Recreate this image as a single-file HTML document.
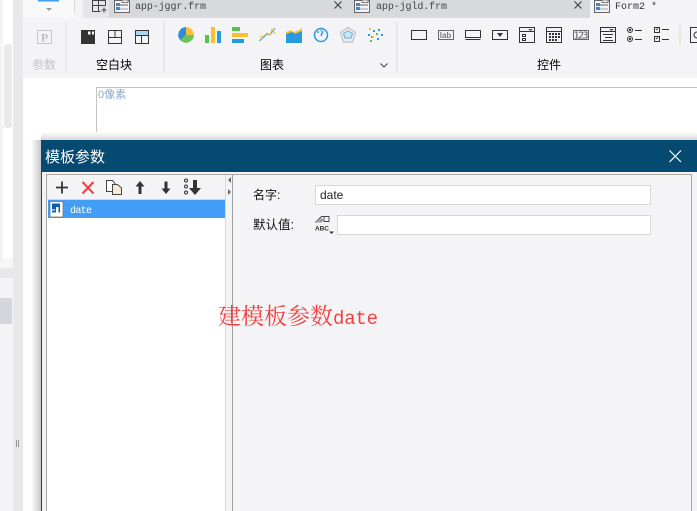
<!DOCTYPE html>
<html><head><meta charset="utf-8"><style>
html,body{margin:0;padding:0;background:#fff}
body{width:697px;height:511px;overflow:hidden;position:relative}
svg{position:absolute;left:0;top:0;display:block}
text{font-family:"Liberation Sans","Noto Sans CJK SC",sans-serif}
</style></head><body>
<svg width="697" height="511" viewBox="0 0 697 511" xmlns="http://www.w3.org/2000/svg">
<defs>
<linearGradient id="ls" x1="0" x2="1" y1="0" y2="0"><stop offset="0" stop-color="#fff"/><stop offset="1" stop-color="#c8c8c8"/></linearGradient>
<linearGradient id="ts" x1="0" x2="0" y1="0" y2="1"><stop offset="0" stop-color="#fff"/><stop offset="1" stop-color="#d8d8d8"/></linearGradient>
<g id="doc"><rect x="0.5" y="0.5" width="15" height="12" fill="#f4f4f6" stroke="#666"/><rect x="2" y="3" width="4" height="3" fill="#3b86cf"/><rect x="2" y="7" width="4" height="3" fill="#3b86cf"/><rect x="6" y="4" width="8" height="2" fill="#aaa"/><rect x="6" y="8" width="8" height="2" fill="#ccc"/><rect x="8" y="0" width="6" height="2.500" fill="#f4f4f6" stroke="#666" stroke-width=".8"/></g>
</defs>
<!-- left side -->
<rect x="0" y="0" width="3" height="511" fill="#f4f4f6"/>
<rect x="3" y="0" width="10" height="268" fill="#fff"/>
<rect x="4" y="44" width="8" height="84" rx="3" fill="#e9e9e9"/>
<rect x="3" y="258" width="10" height="10" fill="#f6f6f6"/>
<rect x="0" y="268" width="13" height="10" fill="#e8e8e8"/>
<rect x="0" y="278" width="13" height="233" fill="#f4f4f6"/>
<rect x="0" y="298" width="12" height="26" fill="#d5d6db"/>
<rect x="13" y="0" width="10" height="511" fill="#e8e8e8"/>
<rect x="16" y="440" width="1" height="7" fill="#999"/><rect x="18" y="440" width="1" height="7" fill="#999"/>
<!-- top tabs -->
<rect x="23" y="0" width="674" height="78" fill="#f4f4f6"/>
<rect x="23" y="0" width="52" height="18" fill="#f8f8f9"/>
<rect x="38" y="0" width="21" height="1.500" fill="#3f9cf0"/>
<path d="M46 8h6l-3 3z" fill="#999"/>
<rect x="74" y="0" width="1" height="14" fill="#d8d8d8"/>
<rect x="83" y="0" width="507" height="18" fill="#d8d9dc"/>
<rect x="83" y="0" width="26" height="18" fill="#e6e6e9"/>
<path d="M92.500 0v11.500h8M92.500 0.500h13v5M92.500 5.500h13M98.500 0v11.500M104 7.500v5M101.500 10h5" fill="none" stroke="#444" stroke-width="1"/>
<use href="#doc" x="114" y="0"/>
<text x="135" y="9" font-size="10" style="font-family:'Liberation Mono','Liberation Serif',monospace" fill="#444" textLength="71">app-jggr.frm</text>
<path d="M334.500 1.500l7 7m0-7l-7 7" stroke="#444" stroke-width="1.200" fill="none"/>
<use href="#doc" x="354" y="0"/>
<text x="376" y="9" font-size="10" style="font-family:'Liberation Mono','Liberation Serif',monospace" fill="#444" textLength="71">app-jgld.frm</text>
<path d="M574.500 1.500l7 7m0-7l-7 7" stroke="#444" stroke-width="1.200" fill="none"/>
<rect x="590" y="0" width="107" height="18" fill="#f4f4f6"/>
<use href="#doc" x="594" y="0"/>
<text x="615" y="9" font-size="10" style="font-family:'Liberation Mono','Liberation Serif',monospace" fill="#333" textLength="42">Form2 *</text>
<!-- ribbon separators -->
<rect x="65" y="22" width="2" height="50" fill="#e9e9e3"/>
<rect x="163" y="22" width="2" height="50" fill="#e9e9e3"/>
<rect x="396" y="22" width="2" height="50" fill="#e9e9e3"/>
<rect x="679" y="25" width="2" height="20" fill="#e9e6da"/>
<!-- P -->
<rect x="37.500" y="30.500" width="14" height="13" fill="none" stroke="#c8c8c8"/>
<text x="44.500" y="41.500" font-size="12" font-weight="bold" text-anchor="middle" style="font-family:'Liberation Serif',serif" fill="#c0c0c0">P</text>
<text x="32" y="69" font-size="12" fill="#c4c4c4">参数</text>
<!-- blank block icons -->
<rect x="81" y="30" width="14" height="14" fill="#333"/><rect x="88" y="31.500" width="2.500" height="3" fill="#fff"/><rect x="92" y="31.500" width="2" height="3" fill="#fff"/>
<path d="M108.500 30.500h13v13h-13zM108.500 37.500h13M115 30.500v7" fill="none" stroke="#333"/>
<rect x="135" y="30" width="14" height="5" fill="#a9d8f0"/>
<path d="M135.500 30.500h13v13h-13zM135.500 35.500h13M141.500 35.500v8" fill="none" stroke="#333"/>
<text x="96" y="69" font-size="12" fill="#000">空白块</text>
<!-- charts -->
<path d="M186 27a8 8 0 0 1 8 8h-8z" fill="#f9bf3b"/>
<path d="M194 35a8 8 0 0 1-14 5l6-5z" fill="#6ac259"/>
<path d="M186 27v8l-6 5a8 8 0 0 1 6-13z" fill="#2a8fd8"/>
<rect x="205" y="35" width="4" height="8" fill="#5ac24f"/><rect x="211" y="27" width="4" height="16" fill="#fbc02d"/><rect x="217" y="31" width="4" height="12" fill="#2a9ae0"/>
<rect x="232" y="27" width="8" height="4" fill="#5ac24f"/><rect x="232" y="33" width="16" height="4" fill="#fbc02d"/><rect x="232" y="39" width="12" height="4" fill="#2a9ae0"/>
<path d="M259 41l5-4 3-3 3 1 5-7" fill="none" stroke="#3a9be0" stroke-width="1"/>
<path d="M260 37l4-1 3-3 3 2 2-6 3 5" fill="none" stroke="#f0bb3a" stroke-width="1"/>
<path d="M286 32l5-2 3 2 5-2 3-2v6l-5 1-4 2-7-1z" fill="#f9bf3b"/>
<path d="M286 34l6-2 3 2 7-3v12h-16z" fill="#2a9ae0"/>
<circle cx="321" cy="35" r="6.500" fill="none" stroke="#2a9ae0" stroke-width="1.500"/><path d="M321 36l2-5" stroke="#2a9ae0" stroke-width="1.500"/><circle cx="318" cy="32" r="1" fill="#2a9ae0"/><circle cx="321" cy="30.500" r=".8" fill="#2a9ae0"/>
<path d="M348 27.500l7.500 5-3 9.500h-9l-3-9.500z" fill="#ececee" stroke="#c8c8c8" stroke-width="1.500"/>
<path d="M348 31l4.500 2.500-1.500 4.500h-6l-1.500-4.500z" fill="#cfe5f2" stroke="#55b0e8"/>
<g fill="#2a9ae0"><rect x="368" y="34" width="2" height="2"/><rect x="373" y="30" width="2" height="2"/><rect x="378" y="29" width="2" height="2"/><rect x="381" y="34" width="2" height="2"/><rect x="377" y="38" width="2" height="2"/><rect x="371" y="36" width="2" height="2"/></g>
<g fill="#f3c13a"><rect x="369" y="28" width="2" height="2"/><rect x="372" y="36" width="2" height="2"/></g>
<g fill="#5cc24f"><rect x="376" y="33" width="2" height="2"/><rect x="370" y="40" width="2" height="2"/></g>
<text x="260" y="69" font-size="12" fill="#000">图表</text>
<path d="M380.500 63.500l3.500 3.500 3.500-3.500" fill="none" stroke="#444"/>
<!-- controls -->
<g fill="none" stroke="#333">
<rect x="411.500" y="30.500" width="15" height="9"/>
<rect x="438.500" y="30.500" width="15" height="9" stroke="#666"/>
<path d="M465.500 30.500h15v7h-15zM465.500 39.500h15"/>
<rect x="492.500" y="30.500" width="15" height="9"/>
<path d="M519.500 27.500h15v15h-15zM519.500 31.500h15M522.500 34.500h3v2h-3zM522.500 38.500h3v2h-3z"/>
<path d="M546.500 27.500h15v15h-15zM546.500 31.500h15"/>
<rect x="573.500" y="30.500" width="15" height="9" stroke="#666"/>
<path d="M600.500 27.500h15v15h-15zM600.500 31.500h15M603 34.500h10M605 37.500h7M603 40.500h10"/>
<circle cx="630" cy="30" r="2.500"/><circle cx="630" cy="39" r="2.500"/><path d="M635 30.500h7M635 39.500h7"/>
<path d="M654.500 27.500h5v5h-5zM654.500 36.500h5v5h-5zM662 29.500h7M662 39.500h7M656 30l2-1.500M656 39l2-1.500"/>
<path d="M697 27.500h-6.500v15h6.500M697 32a3 3 0 0 0 0 6"/>
</g>
<text x="445.500" y="38" font-size="8" text-anchor="middle" fill="#777" font-weight="bold">lab</text>
<text x="581" y="38.500" font-size="10" text-anchor="middle" fill="#555" style="font-family:'DejaVu Sans Mono',monospace" textLength="15">123</text>
<path d="M497 33h6l-3 4z" fill="#333"/>
<path d="M528 29h5l-2.500 2z" fill="#555"/><path d="M609 29h5l-2.500 2z" fill="#555"/>
<circle cx="630" cy="30" r="1.200" fill="#333"/><circle cx="630" cy="39" r="1.200" fill="#333"/>
<g fill="#333"><rect x="549" y="33" width="2" height="2"/><rect x="552" y="33" width="2" height="2"/><rect x="555" y="33" width="2" height="2"/><rect x="558" y="33" width="2" height="2"/><rect x="549" y="36" width="2" height="2"/><rect x="552" y="36" width="2" height="2"/><rect x="555" y="36" width="2" height="2"/><rect x="558" y="36" width="2" height="2"/><rect x="549" y="39" width="2" height="2"/><rect x="552" y="39" width="2" height="2"/><rect x="555" y="39" width="2" height="2"/></g>
<text x="537" y="69" font-size="12" fill="#000">控件</text>
<!-- canvas -->
<path d="M96.500 140V87.500H697" fill="none" stroke="#c4c4c4"/>
<text x="98" y="98" font-size="11" fill="#8fa9c6">0像素</text>
<!-- shadow -->
<rect x="31" y="140" width="10" height="371" fill="url(#ls)"/>
<rect x="41" y="132" width="656" height="8" fill="url(#ts)"/>
<!-- dialog -->
<rect x="41" y="140" width="656" height="371" fill="#f4f4f6"/>
<rect x="41" y="140" width="656" height="32" fill="#064a72"/>
<rect x="41" y="140" width="1" height="371" fill="#064a72"/>
<text x="45" y="162" font-size="15" fill="#fff">模板参数</text>
<path d="M669.500 150.500l11.500 11.500m0-11.500l-11.500 11.500" stroke="#fff" stroke-width="1.200" fill="none"/>
<rect x="46.500" y="174.500" width="645" height="340" fill="none" stroke="#a8a8a0"/>
<rect x="47" y="199" width="178" height="312" fill="#fff"/>
<rect x="47" y="199" width="178" height="1" fill="#d8d8d8"/>
<rect x="225" y="175" width="1" height="336" fill="#d8d8d8"/>
<rect x="232" y="175" width="1" height="336" fill="#a0a0a0"/>
<path d="M231 177v6l-3-3z" fill="#666"/><path d="M228 189v6l3-3z" fill="#666"/>
<rect x="48" y="200" width="177" height="18" fill="#439cf5"/>
<!-- dialog toolbar -->
<path d="M56 187.500h12M62 181.500v12" stroke="#333" stroke-width="1.800" fill="none"/>
<path d="M82.500 182l11 11.500m0-11.500l-11 11.500" stroke="#ee4040" stroke-width="2" fill="none"/>
<path d="M106.500 180.500h6l2.500 3v8h-8.500z" fill="#fff" stroke="#444"/>
<path d="M112.500 184.500h5l4 3.500v6.500h-9z" fill="#f5ecd0" stroke="#444"/>
<path d="M140 181l-4.500 5.500h3v7.500h3v-7.500h3z" fill="#333"/>
<path d="M166 194l-4.500-5.500h3v-7h3v7h3z" fill="#333"/>
<g fill="none" stroke="#333"><circle cx="186" cy="180.500" r="1.500"/><circle cx="186" cy="186.500" r="1.500"/><circle cx="186" cy="192.500" r="1.500"/></g>
<path d="M195 195l-6-7h4v-8h4v8h4z" fill="#333"/>
<!-- list item -->
<rect x="50" y="201.500" width="13" height="15.500" fill="#fff" stroke="#777" stroke-width=".8"/>
<rect x="52" y="203.500" width="8" height="9" fill="#0a5fae"/><rect x="56" y="207" width="2.500" height="6" fill="#fff"/><rect x="52" y="209" width="3" height="2" fill="#7cc0f0"/>
<text x="70" y="213" font-size="10" fill="#fff" style="font-family:'Liberation Mono',monospace" textLength="22">date</text>
<!-- fields -->
<text x="253" y="199" font-size="12" fill="#111">名字:</text>
<rect x="315.500" y="185.500" width="335" height="19" fill="#fff" stroke="#d8d8d8"/>
<text x="320" y="199" font-size="12" fill="#222">date</text>
<text x="253" y="229" font-size="12.500" fill="#111">默认值:</text>
<rect x="337.500" y="215.500" width="313" height="19" fill="#fff" stroke="#d8d8d8"/>
<path d="M315.500 222.500l6-6h7.500v5h-5.500M324 216.500v5" fill="none" stroke="#444" stroke-width=".9"/><path d="M317 222.500l4.500-4.500 2 2-2 2.500z" fill="#999"/>
<text x="315" y="230.500" font-size="6.500" font-weight="bold" fill="#333" textLength="14">ABC</text>
<path d="M329 231.500h5l-2.500 2.500z" fill="#333"/>
<!-- red annotation -->
<text x="218" y="324" font-size="23" fill="#f44040" style="font-family:'Noto Serif CJK SC',serif">建模板参数<tspan style="font-family:'Liberation Mono',monospace" font-size="19" textLength="45">date</tspan></text>
</svg>
</body></html>
